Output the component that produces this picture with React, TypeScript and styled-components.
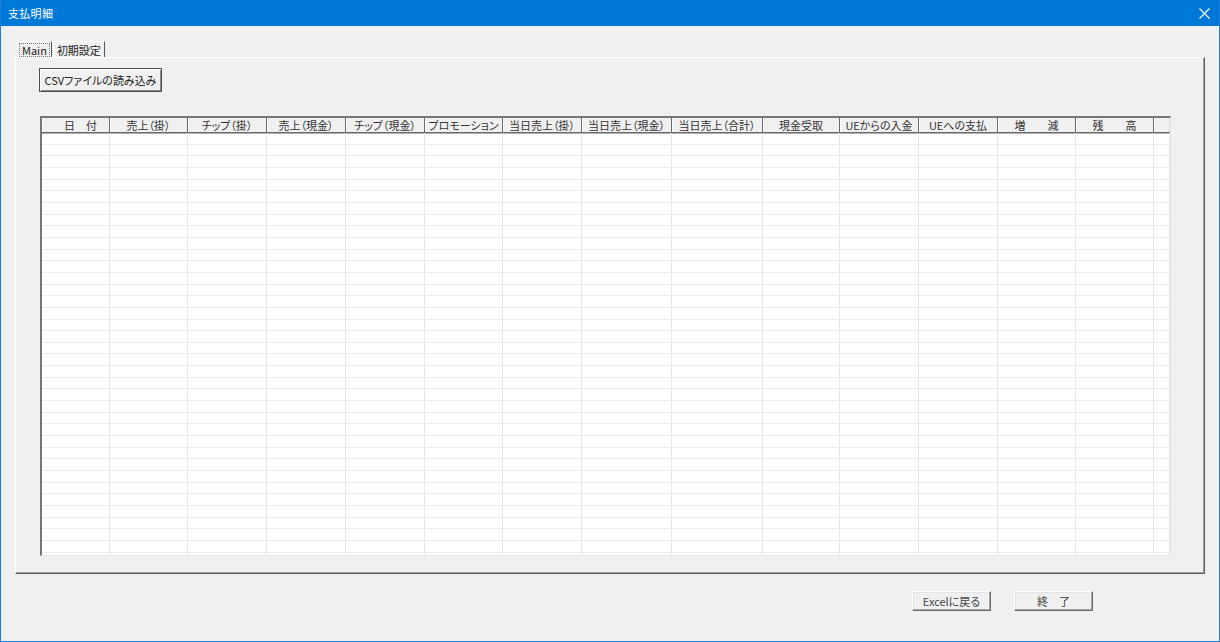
import React from "react";
import styled, { createGlobalStyle } from "styled-components";

const GlobalStyle = createGlobalStyle`
  html, body {
    margin: 0;
    padding: 0;
    background: #f0f0f0;
  }
  body {
    font-family: "Noto Sans CJK JP", "Noto Sans", sans-serif;
    font-size: 11px;
    font-feature-settings: "palt";
    color: #2a2a2a;
  }
`;

const COLUMNS: { label: string; width: number; shift?: number }[] = [
    { label: "日　付", width: 68, shift: 10 },
    { label: "売上（掛）", width: 78 },
    { label: "チップ（掛）", width: 79 },
    { label: "売上（現金）", width: 79 },
    { label: "チップ（現金）", width: 79 },
    { label: "プロモーション", width: 78 },
    { label: "当日売上（掛）", width: 79 },
    { label: "当日売上（現金）", width: 90 },
    { label: "当日売上（合計）", width: 91 },
    { label: "現金受取", width: 77 },
    { label: "UEからの入金", width: 79 },
    { label: "UEへの支払", width: 79 },
    { label: "増　　減", width: 78 },
    { label: "残　　高", width: 78 },
    { label: "", width: 16 },
];

const ROW_COUNT = 37;
const template = COLUMNS.map((c) => `${c.width}px`).join(" ");

const Window = styled.div`
  width: 1220px;
  height: 642px;
  box-sizing: border-box;
  border: 1px solid #1c7fd6;
  border-top: none;
  display: flex;
  flex-direction: column;
  background: #f0f0f0;
  overflow: hidden;
`;

const TitleBar = styled.div`
  height: 26px;
  margin: 0 -1px;
  flex-shrink: 0;
  background: #0078d7;
  color: #fff;
  display: flex;
  align-items: center;
  justify-content: space-between;
  padding: 0 8px 0 8px;
  font-size: 11px;
  letter-spacing: 0.3px;
`;

const CloseButton = styled.div`
  width: 12px;
  height: 12px;
  display: flex;
  align-items: center;
  justify-content: center;
  margin-right: 2px;
`;

const Body = styled.div`
  flex: 1;
  display: flex;
  flex-direction: column;
  padding: 15px 14px 0 14px;
`;

const TabStrip = styled.div`
  height: 16px;
  display: flex;
  align-items: stretch;
  padding-left: 2px;
`;

const Tab = styled.div<{ $active?: boolean }>`
  display: flex;
  align-items: center;
  padding: 0 ${(p) => (p.$active ? "1px" : "3px")};
  border-left: 1px solid #fff;
  border-top: 1px solid #fff;
  border-right: 1px solid #5a5a5a;
  box-sizing: border-box;
  margin-right: 1px;
  font-size: 11px;
  color: #222;
`;

const FocusLabel = styled.span`
  border: 1px dotted #7a7a7a;
  padding: 0 2px;
  line-height: 12px;
`;

const TabPage = styled.div`
  width: 1190px;
  height: 517px;
  box-sizing: border-box;
  border-top: 1px solid #fff;
  border-left: 1px solid #fff;
  border-right: 1px solid #5f5f5f;
  border-bottom: 1px solid #5f5f5f;
  box-shadow: inset -1px -1px 0 #a0a0a0;
  padding: 10px 0 0 23px;
  display: flex;
  flex-direction: column;
  align-items: flex-start;
`;

const CommandButton = styled.button`
  height: 24px;
  width: 123px;
  padding: 0;
  font-family: inherit;
  font-size: 11px;
  font-feature-settings: "palt";
  color: #222;
  background: #f0f0f0;
  border: 1px solid #505050;
  box-shadow: inset 1px 1px 0 #fff, inset -1px -1px 0 #8a8a8a;
`;

const GridBox = styled.div`
  margin: 24px 0 0 1px;
  width: 1131px;
  height: 440px;
  box-sizing: border-box;
  border-left: 2px solid #767676;
  border-top: 2px solid #767676;
  border-right: 1px solid #e6e6e6;
  border-bottom: 1px solid #e6e6e6;
  background: #fff;
  overflow: hidden;
`;

const HeaderRow = styled.div`
  display: grid;
  grid-template-columns: ${template};
  height: 14px;
  background: #f0f0f0;
  border-bottom: 1px solid #6a6a6a;
  box-shadow: 0 1px 0 #b0b0b0;
`;

const HeaderCell = styled.div<{ $shift?: number; $last?: boolean }>`
  box-sizing: border-box;
  border-right: 1px solid ${(p) => (p.$last ? "#e0e0e0" : "#6a6a6a")};
  box-shadow: inset 1px 0 0 #fff;
  display: flex;
  align-items: center;
  justify-content: center;
  padding-left: ${(p) => p.$shift ?? 0}px;
  font-size: 11px;
  line-height: 13px;
  color: #333;
  white-space: nowrap;
  overflow: hidden;
`;

const DataRow = styled.div`
  display: grid;
  grid-template-columns: ${template};
  height: 11.67px;
  box-sizing: border-box;
  border-bottom: 1px solid #ececec;
`;

const DataCell = styled.div`
  border-right: 1px solid #e6e6e6;
`;

const Footer = styled.div`
  display: flex;
  justify-content: flex-end;
  gap: 23px;
  padding: 17px 112px 0 0;
`;

const FooterButton = styled.button`
  width: 79px;
  height: 20px;
  padding: 0;
  font-family: inherit;
  font-size: 11px;
  font-feature-settings: "palt";
  color: #444;
  background: #f0f0f0;
  border: 1px solid;
  border-color: #fff #6a6a6a #6a6a6a #fff;
  box-shadow: inset -1px -1px 0 #a8a8a8, inset 1px 1px 0 #e3e3e3;
`;

const App: React.FC = () => {
    return (
        <>
            <GlobalStyle />
            <Window>
                <TitleBar>
                    <span>支払明細</span>
                    <CloseButton>
                        <svg width="11" height="11" viewBox="0 0 11 11">
                            <path d="M0.5 0.5 L10.5 10.5 M10.5 0.5 L0.5 10.5" stroke="#fff" strokeWidth="1.1" />
                        </svg>
                    </CloseButton>
                </TitleBar>
                <Body>
                    <TabStrip>
                        <Tab $active>
                            <FocusLabel>Main</FocusLabel>
                        </Tab>
                        <Tab>初期設定</Tab>
                    </TabStrip>
                    <TabPage>
                        <CommandButton>CSVファイルの読み込み</CommandButton>
                        <GridBox>
                            <HeaderRow>
                                {COLUMNS.map((c, i) => (
                                    <HeaderCell key={i} $shift={c.shift} $last={i === COLUMNS.length - 1}>
                                        {c.label}
                                    </HeaderCell>
                                ))}
                            </HeaderRow>
                            {Array.from({ length: ROW_COUNT }).map((_, r) => (
                                <DataRow key={r}>
                                    {COLUMNS.map((_, i) => (
                                        <DataCell key={i} />
                                    ))}
                                </DataRow>
                            ))}
                        </GridBox>
                    </TabPage>
                    <Footer>
                        <FooterButton>Excelに戻る</FooterButton>
                        <FooterButton>終　了</FooterButton>
                    </Footer>
                </Body>
            </Window>
        </>
    );
};

export default App;
